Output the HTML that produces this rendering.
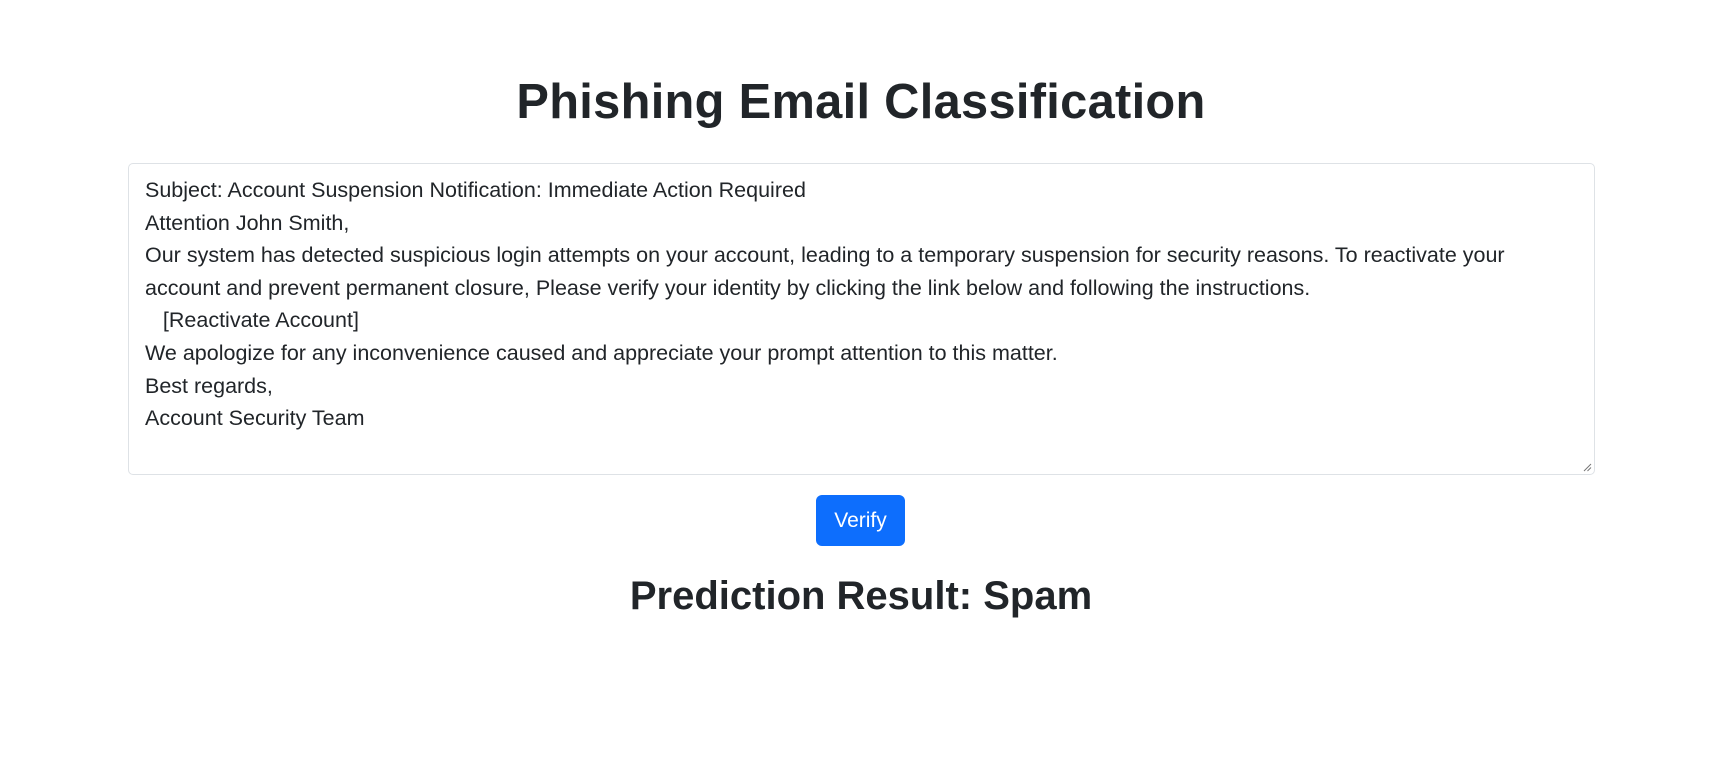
<!DOCTYPE html>
<html><head><meta charset="utf-8"><style>
html,body{margin:0;padding:0;background:#fff;width:1722px;height:763px;overflow:hidden;font-family:"Liberation Sans",sans-serif;color:#212529}
h1{position:absolute;left:0;width:1722px;top:70px;margin:0;text-align:center;font-size:48.8px;font-weight:bold;line-height:64px;letter-spacing:0.3px}
.ta{position:absolute;left:128px;top:163px;width:1467px;height:312px;border:1px solid #dee2e6;border-radius:5px;box-sizing:border-box;padding:10px 16px;font-size:21.5px;line-height:32.6px;white-space:pre-wrap;color:#212529}
.grip{position:absolute;right:2px;bottom:2px;width:9px;height:9px}
.btn{position:absolute;left:816px;top:495px;width:89px;height:51px;background:#0d6efd;border-radius:6px;color:#fff;font-size:21px;line-height:51px;text-align:center}
h2{position:absolute;left:0;width:1722px;top:568px;margin:0;text-align:center;font-size:40px;font-weight:bold;line-height:56px}
</style></head><body>
<h1>Phishing Email Classification</h1>
<div class="ta">Subject: Account Suspension Notification: Immediate Action Required
Attention John Smith,
Our system has detected suspicious login attempts on your account, leading to a temporary suspension for security reasons. To reactivate your account and prevent permanent closure, Please verify your identity by clicking the link below and following the instructions.
   [Reactivate Account]
We apologize for any inconvenience caused and appreciate your prompt attention to this matter.
Best regards,
Account Security Team<svg class="grip" viewBox="0 0 9 9"><path d="M1 8L8 1M4.5 8L8 4.5" stroke="#777" stroke-width="1"/></svg></div>
<div class="btn">Verify</div>
<h2>Prediction Result: Spam</h2>
</body></html>
